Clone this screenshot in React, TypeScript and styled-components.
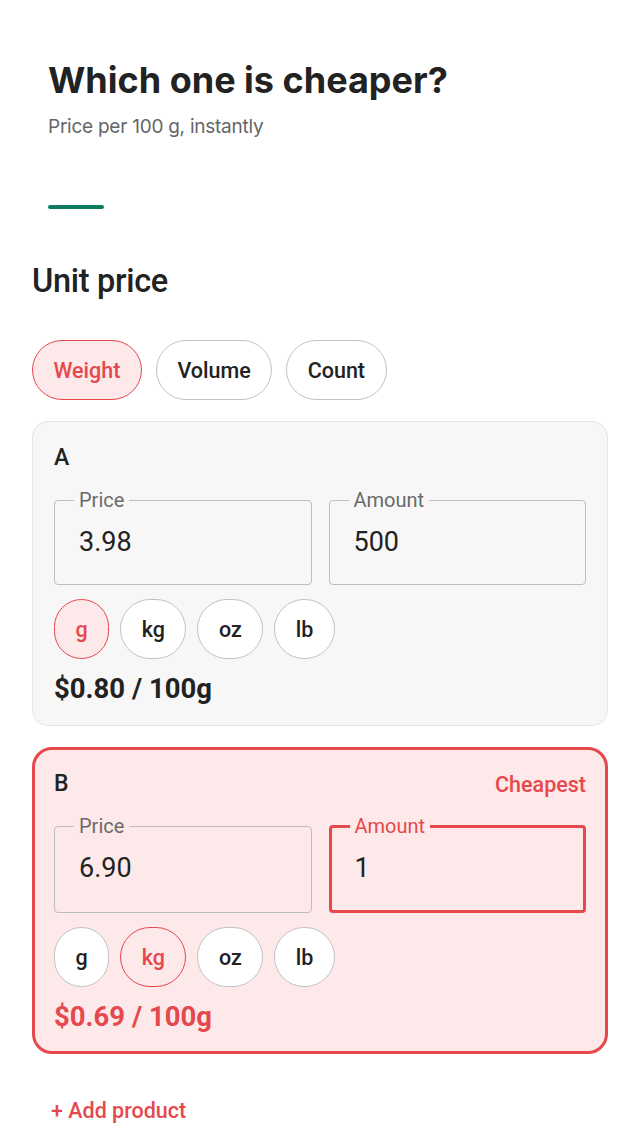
import React, { useState } from 'react';
import styled, { createGlobalStyle } from 'styled-components';

const red = '#e5484d';
const pink = '#fde8ea';
const ink = '#222222';

const GlobalStyle = createGlobalStyle`
  * { box-sizing: border-box; }
  body {
    margin: 0;
    background: #ffffff;
    font-family: Roboto, "Liberation Sans", sans-serif;
    color: ${ink};
  }
`;

const Page = styled.main`
  display: flex;
  flex-direction: column;
  padding: 59px 32px 24px;
`;

const Header = styled.header`
  display: flex;
  flex-direction: column;
  padding: 0 16px;
`;

const Title = styled.h1`
  margin: 0;
  font-family: Inter, "Liberation Sans", sans-serif;
  font-weight: 700;
  font-size: 36px;
  line-height: 43px;
  color: ${ink};
`;

const Subtitle = styled.p`
  margin: 12px 0 0;
  font-family: Inter, "Liberation Sans", sans-serif;
  font-size: 19px;
  line-height: 25px;
  letter-spacing: -0.25px;
  color: #666666;
`;

const Accent = styled.span`
  display: block;
  width: 56px;
  height: 4px;
  margin-top: 66px;
  border-radius: 2px;
  background: #0f7b5f;
`;

const SectionTitle = styled.h2`
  margin: 53px 0 0;
  font-size: 32.5px;
  line-height: 38px;
  font-weight: 500;
  letter-spacing: -0.3px;
`;

const ChipRow = styled.div<{ $gap: number; $top: number }>`
  display: flex;
  gap: ${({ $gap }) => $gap}px;
  margin-top: ${({ $top }) => $top}px;
`;

const Chip = styled.button<{ $active?: boolean; $pad: number; $h: number }>`
  height: ${({ $h }) => $h}px;
  padding: 0 ${({ $pad }) => $pad}px;
  border-radius: 999px;
  border: 1.5px solid ${({ $active }) => ($active ? red : '#c2c2c2')};
  background: ${({ $active }) => ($active ? pink : '#ffffff')};
  color: ${({ $active }) => ($active ? red : ink)};
  font-family: Roboto, "Liberation Sans", sans-serif;
  font-size: 21.5px;
  font-weight: 500;
  cursor: pointer;
`;

const Cards = styled.div`
  display: flex;
  flex-direction: column;
  gap: 21px;
  margin-top: 21px;
`;

const Card = styled.section<{ $best?: boolean }>`
  display: flex;
  flex-direction: column;
  padding: ${({ $best }) => ($best ? '19px' : '21px')};
  border-radius: ${({ $best }) => ($best ? '20px' : '16px')};
  border: ${({ $best }) => ($best ? `3px solid ${red}` : '1px solid #e4e4e4')};
  background: ${({ $best }) => ($best ? pink : '#f7f7f7')};
`;

const CardHead = styled.div`
  display: flex;
  justify-content: space-between;
  align-items: center;
  margin-top: 1px;
  height: 28px;
`;

const CardName = styled.h3`
  margin: 0;
  font-size: 23px;
  font-weight: 500;
  line-height: 28px;
`;

const Badge = styled.span`
  font-size: 21.5px;
  font-weight: 500;
  color: ${red};
`;

const Fields = styled.div`
  display: grid;
  grid-template-columns: 1fr 1fr;
  gap: 17px;
  margin-top: 16px;
`;

const Field = styled.fieldset<{ $focus?: boolean }>`
  margin: 0;
  min-width: 0;
  padding: 0 0 0 ${({ $focus }) => ($focus ? 23 : 24)}px;
  border: ${({ $focus }) => ($focus ? `3px solid ${red}` : '1.5px solid #bdbdbd')};
  border-radius: 4px;
`;

const Label = styled.legend<{ $focus?: boolean }>`
  margin-left: -5px;
  padding: 0 5px;
  font-size: 20px;
  line-height: 24px;
  color: ${({ $focus }) => ($focus ? red : '#6b6b6b')};
`;

const Input = styled.input`
  display: block;
  width: 100%;
  height: 72px;
  padding: 0 0 12px;
  border: none;
  outline: none;
  background: transparent;
  font-family: Roboto, "Liberation Sans", sans-serif;
  font-size: 27px;
  color: ${ink};
`;

const Result = styled.p<{ $best?: boolean }>`
  margin: 14px 0 0;
  font-size: 27.5px;
  line-height: 31px;
  font-weight: 700;
  color: ${({ $best }) => ($best ? red : ink)};
`;

const AddButton = styled.button`
  align-self: flex-start;
  margin-top: 33px;
  padding: 12px 19px;
  border: none;
  background: transparent;
  color: ${red};
  font-family: Roboto, "Liberation Sans", sans-serif;
  font-size: 21.5px;
  line-height: 24px;
  font-weight: 500;
  cursor: pointer;
`;

const units = ['g', 'kg', 'oz', 'lb'];

type Product = { name: string; price: string; amount: string; unit: string; result: string; best?: boolean };

const products: Product[] = [
  { name: 'A', price: '3.98', amount: '500', unit: 'g', result: '$0.80 / 100g' },
  { name: 'B', price: '6.90', amount: '1', unit: 'kg', result: '$0.69 / 100g', best: true },
];

function ProductCard({ p }: { p: Product }) {
  return (
    <Card $best={p.best}>
      <CardHead>
        <CardName>{p.name}</CardName>
        {p.best && <Badge>Cheapest</Badge>}
      </CardHead>
      <Fields>
        <Field>
          <Label>Price</Label>
          <Input defaultValue={p.price} />
        </Field>
        <Field $focus={p.best}>
          <Label $focus={p.best}>Amount</Label>
          <Input defaultValue={p.amount} />
        </Field>
      </Fields>
      <ChipRow $gap={11} $top={14}>
        {units.map((u) => (
          <Chip key={u} $h={60} $pad={20.5} $active={u === p.unit}>
            {u}
          </Chip>
        ))}
      </ChipRow>
      <Result $best={p.best}>{p.result}</Result>
    </Card>
  );
}

export default function App() {
  const [mode, setMode] = useState('Weight');
  return (
    <>
      <GlobalStyle />
      <Page>
        <Header>
          <Title>Which one is cheaper?</Title>
          <Subtitle>Price per 100 g, instantly</Subtitle>
          <Accent />
        </Header>
        <SectionTitle>Unit price</SectionTitle>
        <ChipRow $gap={14} $top={40}>
          {['Weight', 'Volume', 'Count'].map((m) => (
            <Chip key={m} $h={60} $pad={20.5} $active={m === mode} onClick={() => setMode(m)}>
              {m}
            </Chip>
          ))}
        </ChipRow>
        <Cards>
          {products.map((p) => (
            <ProductCard key={p.name} p={p} />
          ))}
        </Cards>
        <AddButton>+ Add product</AddButton>
      </Page>
    </>
  );
}
